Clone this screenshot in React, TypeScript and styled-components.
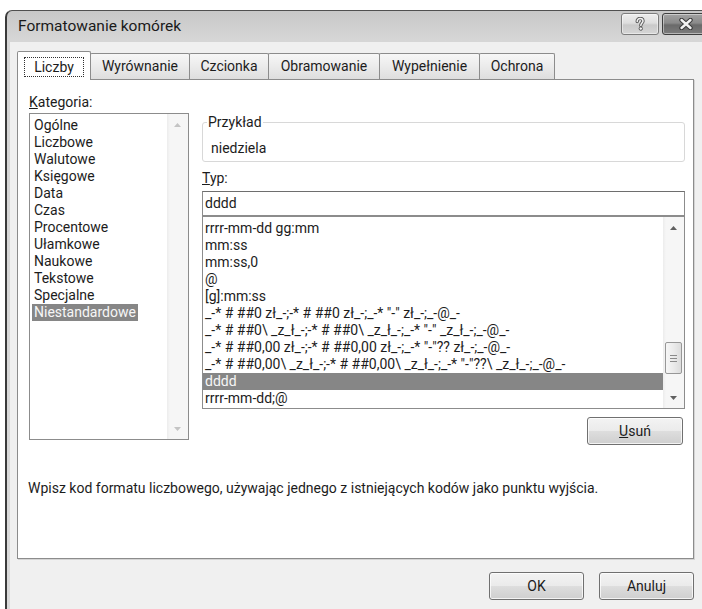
import styled, { createGlobalStyle } from 'styled-components';

const GlobalStyle = createGlobalStyle`
  html, body {
    margin: 0;
    padding: 0;
    background: #ffffff;
    overflow: hidden;
  }
  body {
    font-family: Roboto, 'Liberation Sans', sans-serif;
    font-size: 14px;
    color: #1c1c1c;
  }
  * {
    box-sizing: border-box;
  }
`;

const Desktop = styled.div`
  width: 702px;
  height: 609px;
  overflow: hidden;
  padding: 10px 0 0 5px;
`;

const Window = styled.div`
  width: 712px;
  height: 640px;
  border-top: 1px solid #505050;
  border-left: 2px solid #3a3a3a;
  border-radius: 7px 0 0 0;
  background: linear-gradient(180deg, #c8c8c8 0px, #d6d6d6 28px, #dadada 100%);
  padding: 0 8px 0 3px;
  display: flex;
  flex-direction: column;
`;

const TitleBar = styled.div`
  height: 31px;
  display: flex;
  align-items: flex-start;
  padding-left: 8px;
`;

const TitleText = styled.div`
  font-size: 15.5px;
  line-height: 31px;
  color: #1a1a1a;
`;

const CaptionButtons = styled.div`
  margin-left: auto;
  margin-top: 2px;
  display: flex;
  gap: 3px;
`;

const CaptionButton = styled.div<{ $close?: boolean }>`
  width: ${(p) => (p.$close ? 47 : 38)}px;
  height: 22px;
  border: 1px solid ${(p) => (p.$close ? '#3e3e3e' : '#7c7c7c')};
  border-radius: 3px;
  display: flex;
  align-items: center;
  justify-content: center;
  background: ${(p) =>
    p.$close
      ? 'linear-gradient(180deg, #a2a2a2 0%, #8a8a8a 45%, #6a6a6a 55%, #7c7c7c 100%)'
      : 'linear-gradient(180deg, #ededed 0%, #dedede 45%, #c9c9c9 55%, #d6d6d6 100%)'};
  box-shadow: inset 0 0 0 1px rgba(255, 255, 255, 0.45);
`;

const Client = styled.div`
  flex: 1;
  background: #f0f0f0;
  padding: 9px 15px 0 7px;
`;

const TabStrip = styled.div`
  display: flex;
  align-items: flex-end;
  height: 29px;
  margin-bottom: -1px;
  position: relative;
  z-index: 1;
`;

const Tab = styled.div<{ $active?: boolean; $w: number }>`
  width: ${(p) => p.$w}px;
  height: ${(p) => (p.$active ? 29 : 26)}px;
  margin-bottom: ${(p) => (p.$active ? 0 : 1)}px;
  margin-left: -1px;
  &:first-child {
    margin-left: 0;
  }
  border: 1px solid #8c8c8c;
  border-bottom: none;
  border-radius: 2px 2px 0 0;
  background: ${(p) => (p.$active ? '#ffffff' : 'linear-gradient(180deg, #f7f7f7 0%, #ebebeb 50%, #dedede 100%)')};
  display: flex;
  justify-content: center;
  padding-top: ${(p) => (p.$active ? 5 : 4)}px;
  line-height: 17px;
  position: relative;
  z-index: ${(p) => (p.$active ? 2 : 1)};
`;

const FocusLabel = styled.span`
  display: block;
  height: 20px;
  line-height: 18px;
  padding: 0 9px;
  border: 1px dotted #303030;
`;

const Panel = styled.div`
  height: 480px;
  background: #ffffff;
  border: 1px solid #8c8c8c;
  box-shadow: 1px 1px 0 #d4d4d4;
  padding: 14px 8px 0 11px;
  display: flex;
  flex-direction: column;
`;

const Columns = styled.div`
  display: grid;
  grid-template-columns: 160px 1fr;
  column-gap: 13px;
  align-items: start;
`;

const Column = styled.div`
  display: flex;
  flex-direction: column;
`;

const Label = styled.div`
  line-height: 17px;
`;

const CategoryLabel = styled(Label)`
  margin-bottom: 2px;
`;

const ListBox = styled.div<{ $h: number }>`
  height: ${(p) => p.$h}px;
  border: 1px solid #8c8c8c;
  background: #ffffff;
  display: flex;
  overflow: hidden;
`;

const CategoryItems = styled.div`
  flex: 1;
  padding: 3px 0 0 2px;
`;

const CategoryRow = styled.div`
  height: 17px;
`;

const CategoryText = styled.span<{ $selected?: boolean }>`
  display: inline-block;
  line-height: 17px;
  padding: 0 2px;
  background: ${(p) => (p.$selected ? '#868686' : 'transparent')};
  color: ${(p) => (p.$selected ? '#f6f6f6' : 'inherit')};
`;

const Group = styled.fieldset`
  margin: 20px 0 0 0;
  padding: 0;
  min-width: 0;
  border: 1px solid #d8d8d8;
  border-radius: 3px;
`;

const Legend = styled.legend`
  margin-left: 4px;
  padding: 0 1px;
  line-height: 17px;
`;

const SampleText = styled.div`
  padding: 9px 0 4px 8px;
  line-height: 17px;
`;

const TypeLabel = styled(Label)`
  margin-top: 8px;
`;

const TypeInput = styled.div`
  margin-top: 4px;
  height: 25px;
  border: 1px solid #8c8c8c;
  border-top-color: #6e6e6e;
  background: #ffffff;
  padding-left: 2px;
  line-height: 23px;
`;

const FormatItems = styled.div`
  flex: 1;
  padding: 3px 0 0 0;
  min-width: 0;
`;

const FormatRow = styled.div<{ $selected?: boolean }>`
  height: 17px;
  line-height: 17px;
  padding-left: 2px;
  white-space: pre;
  background: ${(p) => (p.$selected ? '#868686' : 'transparent')};
  color: ${(p) => (p.$selected ? '#f6f6f6' : 'inherit')};
`;

const ScrollBar = styled.div`
  width: 21px;
  display: flex;
  flex-direction: column;
  background: linear-gradient(90deg, #ececec 0px, #f6f6f6 3px, #f6f6f6 100%);
`;

const ScrollArrow = styled.div`
  height: 21px;
  display: flex;
  align-items: center;
  justify-content: center;
`;

const ScrollTrack = styled.div`
  flex: 1;
  display: flex;
  flex-direction: column;
  justify-content: flex-end;
  padding: 0 2px 13px 2px;
`;

const Thumb = styled.div`
  height: 32px;
  border: 1px solid #979797;
  border-radius: 2px;
  background: linear-gradient(90deg, #f6f6f6 0%, #ebebeb 50%, #dcdcdc 100%);
  display: flex;
  flex-direction: column;
  align-items: center;
  justify-content: center;
  gap: 2px;
`;

const Grip = styled.div`
  width: 7px;
  height: 1px;
  background: #8a8a8a;
`;

const PushButton = styled.div<{ $w: number }>`
  width: ${(p) => p.$w}px;
  height: 28px;
  border: 1px solid #707070;
  border-radius: 3px;
  background: linear-gradient(180deg, #f3f3f3 0%, #ebebeb 48%, #dddddd 52%, #cfcfcf 100%);
  box-shadow: inset 0 0 0 1px rgba(255, 255, 255, 0.75);
  display: flex;
  align-items: center;
  justify-content: center;
  line-height: 17px;
  color: #1c1c1c;
`;

const DeleteButton = styled(PushButton)`
  align-self: flex-end;
  margin: 8px 2px 0 0;
`;

const Hint = styled.div`
  margin: 35px 0 0 -1px;
  line-height: 17px;
`;

const Footer = styled.div`
  display: flex;
  justify-content: flex-end;
  gap: 15px;
  margin-top: 13px;
`;

const tabs = [
  { label: 'Liczby', w: 74 },
  { label: 'Wyrównanie', w: 100 },
  { label: 'Czcionka', w: 80 },
  { label: 'Obramowanie', w: 112 },
  { label: 'Wypełnienie', w: 101 },
  { label: 'Ochrona', w: 76 },
];

const categories = [
  'Ogólne',
  'Liczbowe',
  'Walutowe',
  'Księgowe',
  'Data',
  'Czas',
  'Procentowe',
  'Ułamkowe',
  'Naukowe',
  'Tekstowe',
  'Specjalne',
  'Niestandardowe',
];

const formats = [
  'rrrr-mm-dd gg:mm',
  'mm:ss',
  'mm:ss,0',
  '@',
  '[g]:mm:ss',
  '_-* # ##0 zł_-;-* # ##0 zł_-;_-* "-" zł_-;_-@_-',
  '_-* # ##0\\ _z_ł_-;-* # ##0\\ _z_ł_-;_-* "-" _z_ł_-;_-@_-',
  '_-* # ##0,00 zł_-;-* # ##0,00 zł_-;_-* "-"?? zł_-;_-@_-',
  '_-* # ##0,00\\ _z_ł_-;-* # ##0,00\\ _z_ł_-;_-* "-"??\\ _z_ł_-;_-@_-',
  'dddd',
  'rrrr-mm-dd;@',
];

function Arrow({ up, color }: { up?: boolean; color: string }) {
  return (
    <svg width="7" height="4" viewBox="0 0 7 4">
      <path d={up ? 'M0 4 L3.5 0 L7 4 Z' : 'M0 0 L3.5 4 L7 0 Z'} fill={color} />
    </svg>
  );
}

function HelpGlyph() {
  return (
    <svg width="10" height="14" viewBox="0 0 10 14">
      <path
        d="M2.2 4.6 C2.2 2.4 3.6 1.4 5.2 1.4 C7 1.4 8 2.6 8 4 C8 5.8 5.8 6.2 5.8 8.4"
        fill="none"
        stroke="#5a5a5a"
        strokeWidth="3.4"
        strokeLinecap="round"
      />
      <path
        d="M2.2 4.6 C2.2 2.4 3.6 1.4 5.2 1.4 C7 1.4 8 2.6 8 4 C8 5.8 5.8 6.2 5.8 8.4"
        fill="none"
        stroke="#f2f2f2"
        strokeWidth="1.5"
        strokeLinecap="round"
      />
      <circle cx="5.8" cy="11.6" r="1.7" fill="#f2f2f2" stroke="#5a5a5a" strokeWidth="1" />
    </svg>
  );
}

function CloseGlyph() {
  return (
    <svg width="14" height="12" viewBox="0 0 14 12">
      <path d="M2.5 2 L11.5 10 M11.5 2 L2.5 10" stroke="#3a3a3a" strokeWidth="4.4" strokeLinecap="round" />
      <path d="M2.5 2 L11.5 10 M11.5 2 L2.5 10" stroke="#f4f4f4" strokeWidth="2.4" strokeLinecap="round" />
    </svg>
  );
}

function CategoryList() {
  return (
    <ListBox $h={327}>
      <CategoryItems>
        {categories.map((c, i) => (
          <CategoryRow key={c}>
            <CategoryText $selected={i === categories.length - 1}>{c}</CategoryText>
          </CategoryRow>
        ))}
      </CategoryItems>
      <ScrollBar>
        <ScrollArrow>
          <Arrow up color="#c4c4c4" />
        </ScrollArrow>
        <ScrollTrack />
        <ScrollArrow>
          <Arrow color="#c4c4c4" />
        </ScrollArrow>
      </ScrollBar>
    </ListBox>
  );
}

function FormatList() {
  return (
    <ListBox $h={193}>
      <FormatItems>
        {formats.map((f) => (
          <FormatRow key={f} $selected={f === 'dddd'}>
            {f}
          </FormatRow>
        ))}
      </FormatItems>
      <ScrollBar>
        <ScrollArrow>
          <Arrow up color="#606060" />
        </ScrollArrow>
        <ScrollTrack>
          <Thumb>
            <Grip />
            <Grip />
            <Grip />
          </Thumb>
        </ScrollTrack>
        <ScrollArrow>
          <Arrow color="#606060" />
        </ScrollArrow>
      </ScrollBar>
    </ListBox>
  );
}

export default function App() {
  return (
    <>
      <GlobalStyle />
      <Desktop>
        <Window>
          <TitleBar>
            <TitleText>Formatowanie komórek</TitleText>
            <CaptionButtons>
              <CaptionButton>
                <HelpGlyph />
              </CaptionButton>
              <CaptionButton $close>
                <CloseGlyph />
              </CaptionButton>
            </CaptionButtons>
          </TitleBar>
          <Client>
            <TabStrip>
              {tabs.map((t, i) => (
                <Tab key={t.label} $w={t.w} $active={i === 0}>
                  {i === 0 ? <FocusLabel>{t.label}</FocusLabel> : t.label}
                </Tab>
              ))}
            </TabStrip>
            <Panel>
              <Columns>
                <Column>
                  <CategoryLabel>
                    <u>K</u>ategoria:
                  </CategoryLabel>
                  <CategoryList />
                </Column>
                <Column>
                  <Group>
                    <Legend>Przykład</Legend>
                    <SampleText>niedziela</SampleText>
                  </Group>
                  <TypeLabel>
                    <u>T</u>yp:
                  </TypeLabel>
                  <TypeInput>dddd</TypeInput>
                  <FormatList />
                  <DeleteButton $w={96}>
                    <span>
                      <u>U</u>suń
                    </span>
                  </DeleteButton>
                </Column>
              </Columns>
              <Hint>
                Wpisz kod formatu liczbowego, używając jednego z istniejących kodów jako punktu wyjścia.
              </Hint>
            </Panel>
            <Footer>
              <PushButton $w={95}>OK</PushButton>
              <PushButton $w={95}>Anuluj</PushButton>
            </Footer>
          </Client>
        </Window>
      </Desktop>
    </>
  );
}
